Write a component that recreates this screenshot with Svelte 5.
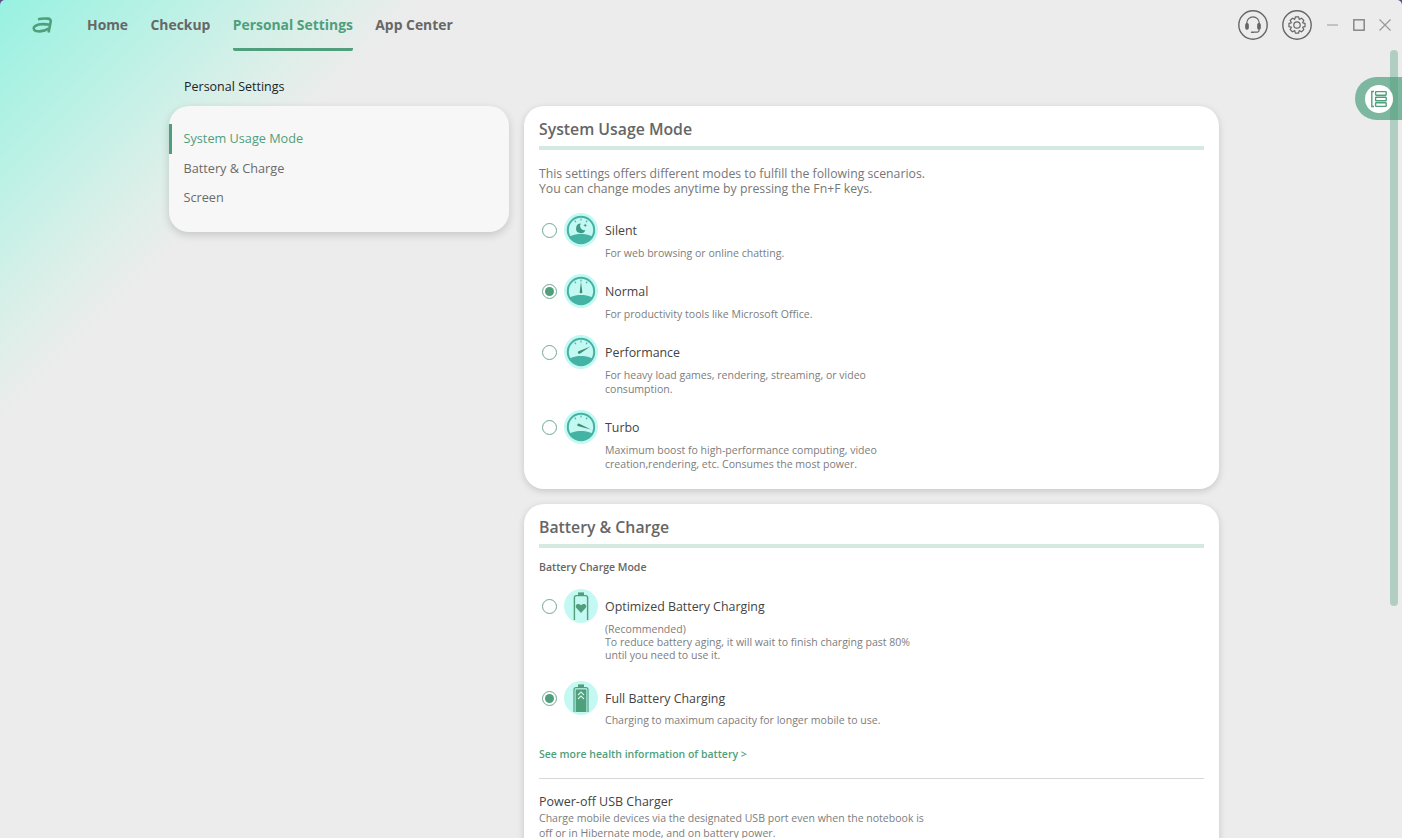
<script lang="ts">
  const nav = [
    { label: 'Home' },
    { label: 'Checkup' },
    { label: 'Personal Settings', active: true },
    { label: 'App Center' }
  ];

  const sideItems = ['System Usage Mode', 'Battery & Charge', 'Screen'];

  const modes = [
    { name: 'Silent', kind: 'silent', lines: ['For web browsing or online chatting.'] },
    { name: 'Normal', kind: 'normal', checked: true, lines: ['For productivity tools like Microsoft Office.'] },
    { name: 'Performance', kind: 'performance', lines: ['For heavy load games, rendering, streaming, or video', 'consumption.'] },
    { name: 'Turbo', kind: 'turbo', lines: ['Maximum boost fo high-performance computing, video', 'creation,rendering, etc. Consumes the most power.'] }
  ];

  // eight-tooth cog outline, centred on the 30x30 button
  function gearPath(): string {
    const pts: string[] = [];
    for (let i = 0; i < 8; i++) {
      const a = (i * Math.PI) / 4;
      for (const [r, d] of [[6.2, -0.36], [8.2, -0.2], [8.2, 0.2], [6.2, 0.36]]) {
        pts.push(`${(15 + r * Math.sin(a + d)).toFixed(2)} ${(15 - r * Math.cos(a + d)).toFixed(2)}`);
      }
    }
    return 'M' + pts.join(' L') + ' Z';
  }
</script>

<div class="page">
  <header class="topbar">
    <svg class="logo" viewBox="0 0 21 16" width="21" height="16" fill="none" stroke="#4f9f7c" stroke-width="2.6">
      <path d="M6 2.2 C9 1.5 13 1.3 16 1.6 C18.4 1.9 19 3 18.6 5 L16.6 15.6" />
      <path d="M18 7.8 C13 7 6 7.2 3.4 8.8 C1 10.2 1.2 13.2 4 14 C8 14.8 13.4 13.8 17 11.4" />
    </svg>
    <nav class="nav">
      {#each nav as item}
        <span class="nav-item" class:active={item.active}>{item.label}</span>
      {/each}
    </nav>
    <div class="tools">
      <span class="round">
        <svg viewBox="0 0 30 30" width="30" height="30" fill="none" stroke="#666" stroke-width="1.2">
          <circle cx="15" cy="15" r="14.2" stroke-width="1.4" />
          <path d="M8.8 15 V13 a6.2 6.2 0 0 1 12.4 0 V15" />
          <rect x="7.8" y="13.6" width="2.4" height="5.6" rx="1.1" fill="#666" />
          <rect x="19.8" y="13.6" width="2.4" height="5.6" rx="1.1" fill="#666" />
          <path d="M21 19.2 V20.4 a1.8 1.8 0 0 1 -1.8 1.8 H16" />
          <rect x="12.8" y="21.4" width="3.4" height="1.6" rx=".7" fill="#666" stroke="none" />
        </svg>
      </span>
      <span class="round">
        <svg viewBox="0 0 30 30" width="30" height="30" fill="none" stroke="#666" stroke-width="1.2">
          <circle cx="15" cy="15" r="14.2" stroke-width="1.4" />
          <circle cx="15" cy="15" r="3.2" />
          <path d={gearPath()} stroke-linejoin="round" />
        </svg>
      </span>
      <svg class="win min" viewBox="0 0 12 12" width="12" height="12"><path d="M0 6 H11" stroke="#999" stroke-width="1.2" /></svg>
      <svg class="win" viewBox="0 0 12 12" width="12" height="12"><rect x=".8" y=".8" width="10.4" height="10.4" fill="none" stroke="#888" stroke-width="1.5" /></svg>
      <svg class="win" viewBox="0 0 12 12" width="12" height="12"><path d="M.5 .5 L11.5 11.5 M11.5 .5 L.5 11.5" stroke="#999" stroke-width="1.2" /></svg>
    </div>
  </header>

  <main class="content">
    <aside class="side">
      <h2 class="crumb">Personal Settings</h2>
      <div class="side-card">
        {#each sideItems as item, i}
          <div class="side-item" class:current={i === 0}>{item}</div>
        {/each}
      </div>
    </aside>

    <div class="cards">
      <section class="card first">
        <h3 class="card-title">System Usage Mode</h3>
        <p class="intro">This settings offers different modes to fulfill the following scenarios.<br />You can change modes anytime by pressing the Fn+F keys.</p>
        {#each modes as mode}
          <div class="option">
            <span class="radio" class:on={mode.checked}></span>
            <svg class="icon" viewBox="0 0 34 34" width="34" height="34">
              <circle cx="17" cy="17" r="17" fill="#c4f8f2" />
              <circle cx="17" cy="17" r="13.2" fill="none" stroke="#45b3a4" stroke-width="2" />
              <path d="M5.4 23.6 C10 21.4 13.4 21 17 21 C20.6 21 24 21.4 28.6 23.6 C26 27.8 21.8 30.2 17 30.2 C12.2 30.2 8 27.8 5.4 23.6 Z" fill="#45b3a4" />
              <path d="M17 5.6 V7.6 M10.8 7.6 L11.9 9.2 M23.2 7.6 L22.1 9.2" stroke="#45b3a4" stroke-width="1.1" />
              {#if mode.kind === 'silent'}
                <path d="M16.8 10.6 A4.8 4.8 0 1 0 21.4 17 A4.2 4.2 0 0 1 16.8 10.6 Z" fill="#3f9a85" />
                <path d="M21.2 10.6 l.6 1.2 1.2.5 -1.2.6 -.6 1.2 -.6-1.2 -1.2-.6 1.2-.5 z" fill="#3f9a85" />
              {:else if mode.kind === 'normal'}
                <path d="M15.6 18.6 L17 7.8 L18.4 18.6 A1.6 1.6 0 0 1 15.6 18.6 Z" fill="#3f8f74" />
              {:else if mode.kind === 'performance'}
                <path d="M14 16.6 L26.4 11.4 L15.4 19 A1.8 1.8 0 0 1 14 16.6 Z" fill="#3f8f74" />
              {:else}
                <path d="M14.8 13.4 L27 19.4 L13.6 16 A1.6 1.6 0 0 1 14.8 13.4 Z" fill="#3f8f74" />
              {/if}
            </svg>
            <div class="text">
              <div class="name">{mode.name}</div>
              <div class="desc">
                {#each mode.lines as line}<div>{line}</div>{/each}
              </div>
            </div>
          </div>
        {/each}
      </section>

      <section class="card second">
        <h3 class="card-title">Battery &amp; Charge</h3>
        <div class="subhead">Battery Charge Mode</div>

        <div class="option battery">
          <span class="radio"></span>
          <svg class="icon" viewBox="0 0 34 34" width="34" height="34">
            <circle cx="17" cy="17" r="17" fill="#c4f8f2" />
            <rect x="14" y="3.4" width="6" height="2.6" fill="#4f9f7c" />
            <path d="M10.4 31 V8.6 a2 2 0 0 1 2-2 H21.6 a2 2 0 0 1 2 2 V31" fill="none" stroke="#4f9f7c" stroke-width="1.4" />
            <path d="M17 24 L12.2 18.8 C10.6 16.4 13.6 13.4 17 16.2 C20.4 13.4 23.4 16.4 21.8 18.8 Z" fill="#4f9f7c" />
          </svg>
          <div class="text">
            <div class="name">Optimized Battery Charging</div>
            <div class="desc long">
              <div>(Recommended)</div>
              <div>To reduce battery aging, it will wait to finish charging past 80%</div>
              <div>until you need to use it.</div>
            </div>
          </div>
        </div>

        <div class="option battery full">
          <span class="radio on"></span>
          <svg class="icon" viewBox="0 0 34 34" width="34" height="34">
            <circle cx="17" cy="17" r="17" fill="#c4f8f2" />
            <rect x="14" y="3.4" width="6" height="2.6" fill="#4f9f7c" />
            <path d="M10 31 V8.6 a2 2 0 0 1 2-2 H22 a2 2 0 0 1 2 2 V31" fill="none" stroke="#4f9f7c" stroke-width="1.2" />
            <rect x="11.6" y="8.4" width="10.8" height="22.6" fill="#4f9f7c" />
            <path d="M14 14 L17 11 L20 14 M14 18 L17 15 L20 18" fill="none" stroke="#d5f5ea" stroke-width="1.1" />
          </svg>
          <div class="text">
            <div class="name">Full Battery Charging</div>
            <div class="desc">Charging to maximum capacity for longer mobile to use.</div>
          </div>
        </div>

        <div class="more">See more health information of battery &gt;</div>
        <hr class="divider" />
        <div class="usb-name">Power-off USB Charger</div>
        <div class="usb-desc">Charge mobile devices via the designated USB port even when the notebook is<br />off or in Hibernate mode, and on battery power.</div>
      </section>
    </div>
  </main>

  <div class="scrollbar"></div>
  <div class="float-tab">
    <span class="float-circle">
      <svg viewBox="0 0 18 18" width="18" height="18" fill="none" stroke="#4f9f7c" stroke-width="1.4">
        <path d="M4 1.5 H1.8 V16.5 H4" />
        <rect x="5.6" y="1.6" width="10.6" height="3.6" rx=".6" />
        <rect x="5.6" y="7.2" width="10.6" height="3.6" rx=".6" />
        <rect x="5.6" y="12.8" width="10.6" height="3.6" rx=".6" />
      </svg>
    </span>
  </div>
</div>

<style>
  :global(body) {
    margin: 0;
    background: #5f4a86;
  }

  .page {
    position: relative;
    width: 1402px;
    height: 838px;
    overflow: hidden;
    border-radius: 5px 5px 0 0;
    font-family: "Open Sans", "Noto Sans", sans-serif;
    background: linear-gradient(135deg, #98f1e1 0, #bff1e6 141px, #dcefe9 235px, #ececec 300px);
  }

  .topbar {
    display: flex;
    align-items: flex-start;
    height: 51px;
    padding-left: 32px;
    padding-right: 11px;
  }

  .logo {
    margin-top: 17px;
    flex: none;
  }

  .nav {
    display: flex;
    gap: 22.4px;
    margin-left: 34px;
  }

  .nav-item {
    height: 51px;
    box-sizing: border-box;
    padding-top: 15px;
    font-size: 13.9px;
    line-height: 20px;
    font-weight: 700;
    color: #676767;
    border-bottom: 3px solid transparent;
  }

  .nav-item.active {
    color: #4f9f7c;
    border-bottom-color: #4f9f7c;
    border-radius: 0 0 2px 2px;
  }

  .tools {
    display: flex;
    align-items: center;
    margin-left: auto;
    height: 50px;
  }

  .round {
    display: block;
    width: 30px;
    height: 30px;
    margin-right: 14px;
  }

  .round + .round {
    margin-right: 15px;
  }

  .win {
    margin-left: 14px;
  }

  .win.min {
    margin-left: 0;
  }

  .content {
    display: flex;
    gap: 15px;
    padding-left: 169px;
  }

  .side {
    width: 340px;
    flex: none;
  }

  .crumb {
    margin: 0;
    padding: 27px 0 10px 15px;
    font-size: 12.5px;
    line-height: 18px;
    font-weight: 400;
    color: #222;
  }

  .side-card {
    height: 126px;
    box-sizing: border-box;
    padding-top: 18px;
    background: #f7f7f7;
    border-radius: 20px;
    box-shadow: 0 3px 8px rgba(0, 0, 0, 0.16);
  }

  .side-item {
    height: 29.5px;
    line-height: 29.5px;
    padding-left: 14.5px;
    font-size: 12.7px;
    color: #6b6b6b;
  }

  .side-item.current {
    color: #4f9f7c;
    padding-left: 11.5px;
    border-left: 3px solid #4f9f7c;
  }

  .cards {
    width: 695px;
    flex: none;
    padding-top: 55px;
  }

  .card {
    box-sizing: border-box;
    background: #fff;
    border-radius: 20px;
    padding: 12px 15px 0;
    box-shadow: 0 2px 7px rgba(0, 0, 0, 0.16);
  }

  .card.first {
    height: 383px;
    margin-bottom: 15px;
  }

  .card.second {
    height: 400px;
  }

  .card-title {
    margin: 0;
    height: 28px;
    line-height: 22px;
    font-size: 15.8px;
    font-weight: 600;
    color: #666;
    border-bottom: 4px solid #d6e9e0;
  }

  .intro {
    margin: 16px 0 17px;
    font-size: 12.25px;
    line-height: 15px;
    color: #777;
  }

  .option {
    display: flex;
    margin-bottom: 13.7px;
  }

  .radio {
    flex: none;
    box-sizing: border-box;
    width: 15px;
    height: 15px;
    margin: 10px 7px 0 3px;
    border: 1px solid #6fa893;
    border-radius: 50%;
    background: #fff;
    position: relative;
  }

  .radio.on::after {
    content: "";
    position: absolute;
    inset: 2px;
    border-radius: 50%;
    background: #4f9f7c;
  }

  .icon {
    flex: none;
    margin-right: 7px;
  }

  .text {
    padding-top: 9px;
  }

  .name {
    font-size: 12.4px;
    line-height: 18px;
    color: #444;
  }

  .desc {
    margin-top: 7px;
    font-size: 10.55px;
    line-height: 13.5px;
    color: #7d7d7d;
  }

  .subhead {
    margin: 12px 0 14px;
    font-size: 10.5px;
    line-height: 15px;
    font-weight: 600;
    color: #666;
  }

  .option.battery {
    margin-bottom: 19px;
  }

  .desc.long {
    line-height: 13px;
  }

  .full .desc {
    margin-top: 6px;
  }

  .more {
    margin-top: 17.5px;
    font-size: 10.5px;
    line-height: 15px;
    font-weight: 600;
    color: #4f9f7c;
  }

  .divider {
    margin: 16px 0 14px;
    border: 0;
    border-top: 1px solid #d8d8d8;
  }

  .usb-name {
    font-size: 12.5px;
    line-height: 17px;
    color: #444;
  }

  .usb-desc {
    margin-top: 1px;
    font-size: 10.55px;
    line-height: 15px;
    color: #7d7d7d;
  }

  .scrollbar {
    position: absolute;
    left: 1390px;
    top: 50px;
    width: 8px;
    height: 556px;
    border-radius: 4px;
    background: rgba(79, 159, 124, 0.38);
    z-index: 2;
  }

  .float-tab {
    position: absolute;
    right: 0;
    top: 77px;
    width: 47px;
    height: 43px;
    border-radius: 22px 0 0 22px;
    background: #7eb79f;
    display: flex;
    align-items: center;
    padding-left: 10px;
    box-sizing: border-box;
  }

  .float-circle {
    position: relative;
    z-index: 3;
    flex: none;
    width: 28px;
    height: 28px;
    border-radius: 50%;
    background: #fff;
    display: flex;
    align-items: center;
    justify-content: center;
  }
</style>
